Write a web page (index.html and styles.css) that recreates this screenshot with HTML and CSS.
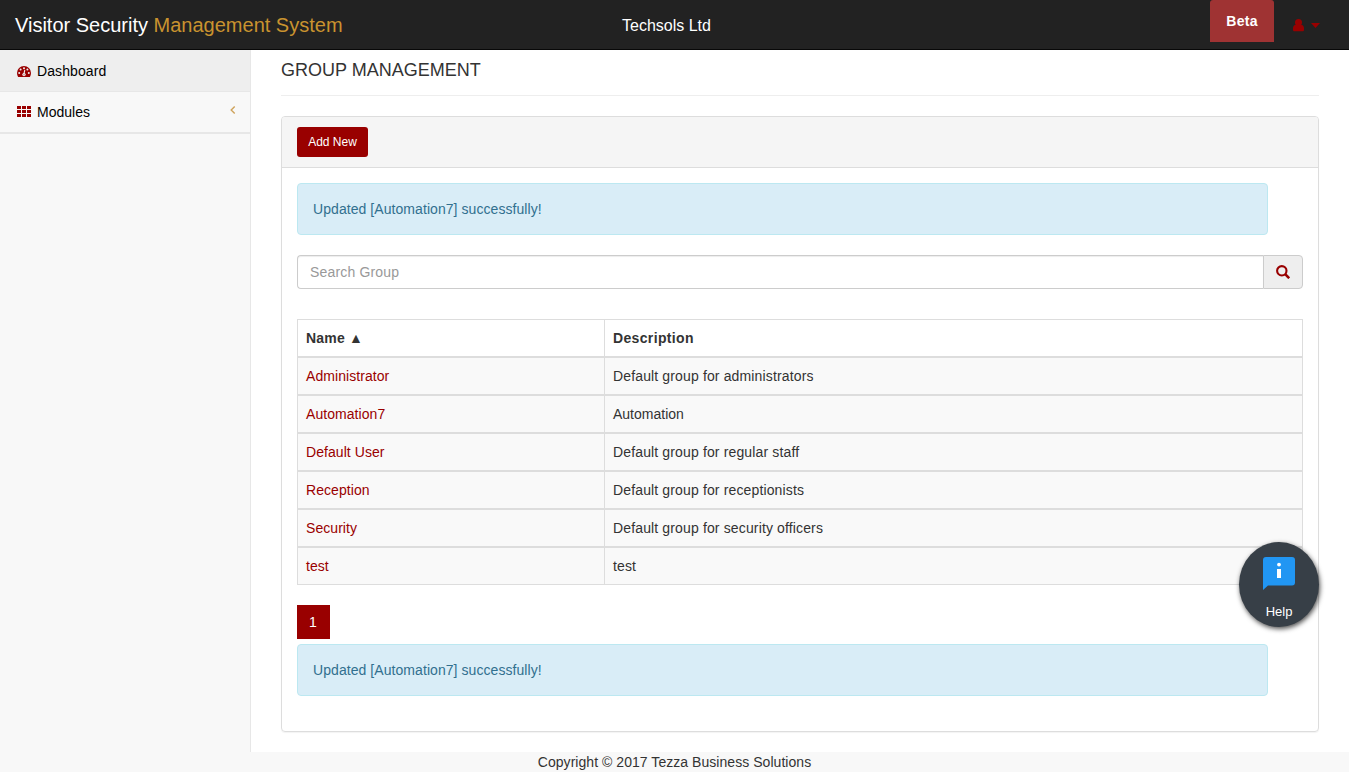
FILE: index.html
```html
<!DOCTYPE html>
<html lang="en">
<head>
<meta charset="utf-8">
<title>Visitor Security Management System</title>
<link rel="stylesheet" href="styles.css">
</head>
<body>
<header class="navbar">
  <a class="brand">Visitor Security <span class="brand-accent">Management System</span></a>
  <div class="company">Techsols Ltd</div>
  <div class="nav-right">
    <span class="beta">Beta</span>
    <a class="user-menu">
      <svg class="user-icon" width="12" height="13" viewBox="0 0 12 13"><circle cx="5.500" cy="3.500" r="3.500"/><path d="M2.500 6C.8 6.200 0 7.500 0 9.500v1.200c0 .9.600 1.600 1.600 1.600h7.800c1 0 1.600-.7 1.600-1.600V9.500C11 7.500 10.200 6.200 8.500 6z"/></svg>
      <svg class="caret" width="9" height="5" viewBox="0 0 9 5"><path d="M0 0h9L4.500 5z"/></svg>
    </a>
  </div>
</header>
<div class="layout">
  <nav class="sidebar">
    <a class="side-item active">
      <svg class="side-icon" width="14" height="15" viewBox="0 0 14 15"><path class="red" d="M0 10a7 7 0 0 1 14 0c0 1.400-.4 2.600-1 3.700-.1.200-.2.300-.4.300H1.400c-.2 0-.3-.1-.4-.3C.4 12.600 0 11.400 0 10z"/><g class="dial"><circle cx="2.200" cy="10" r="1"/><circle cx="3.600" cy="6.600" r="1"/><circle cx="7" cy="5.200" r="1"/><circle cx="10.400" cy="6.600" r="1"/><circle cx="11.800" cy="10" r="1"/><circle cx="7" cy="11.600" r="1.700"/><path d="M6.300 11l1-4.200 1 .2-.8 4.200z"/></g><circle class="red" cx="7" cy="11.700" r=".5"/></svg>
      <span>Dashboard</span>
    </a>
    <a class="side-item">
      <svg class="side-icon" width="14" height="14" viewBox="0 0 14 14"><path class="red" d="M0 1h4v3H0zM5 1h4v3H5zM10 1h4v3h-4zM0 5h4v3H0zM5 5h4v3H5zM10 5h4v3h-4zM0 9h4v3H0zM5 9h4v3H5zM10 9h4v3h-4z"/></svg>
      <span>Modules</span>
      <svg class="arrow" width="6" height="8" viewBox="0 0 6 8"><path d="M4.700.5L1.200 4l3.500 3.500"/></svg>
    </a>
  </nav>
  <main class="page">
    <h1 class="page-title">GROUP MANAGEMENT</h1>
    <section class="panel">
      <div class="panel-heading"><button class="btn-add">Add New</button></div>
      <div class="panel-body">
        <div class="alert">Updated [Automation7] successfully!</div>
        <div class="search">
          <input class="search-input" type="text" placeholder="Search Group">
          <button class="search-btn" aria-label="Search"><svg width="14" height="14" viewBox="0 0 14 14"><circle cx="5.800" cy="5.800" r="4.700"/><path class="handle" d="M9.200 9.200l4 4"/></svg></button>
        </div>
        <table class="groups">
          <thead><tr><th class="name-col">Name ▲</th><th class="desc-col">Description</th></tr></thead>
          <tbody>
            <tr><td><a>Administrator</a></td><td>Default group for administrators</td></tr>
            <tr><td><a>Automation7</a></td><td class="single">Automation</td></tr>
            <tr><td><a>Default User</a></td><td>Default group for regular staff</td></tr>
            <tr><td><a>Reception</a></td><td>Default group for receptionists</td></tr>
            <tr><td><a>Security</a></td><td>Default group for security officers</td></tr>
            <tr><td><a>test</a></td><td>test</td></tr>
          </tbody>
        </table>
        <a class="page-number">1</a>
        <div class="alert alert-bottom">Updated [Automation7] successfully!</div>
      </div>
    </section>
  </main>
</div>
<footer class="footer">Copyright © 2017 Tezza Business Solutions</footer>
<a class="help">
  <svg width="32" height="33" viewBox="0 0 32 33"><path class="bubble" d="M3 0h26a3 3 0 0 1 3 3v22.500a3 3 0 0 1-3 3H5L0 33V3a3 3 0 0 1 3-3z"/><circle class="mark" cx="16" cy="7.600" r="1.900"/><path class="mark" d="M14 12h4v9h-4z"/></svg>
  <span>Help</span>
</a>
</body>
</html>
```
FILE: styles.css
```css
* { box-sizing: border-box; }
body {
  margin: 0;
  height: 772px;
  display: flex;
  flex-direction: column;
  overflow: hidden;
  background: #f8f8f8;
  color: #333;
  font: 14px/20px "Liberation Sans", Arial, sans-serif;
}
svg { display: block; }
.navbar {
  display: grid;
  grid-template-columns: 622px 1fr 139px;
  flex: none;
  height: 50px;
  background: #222;
  border-bottom: 1px solid #080808;
  color: #fff;
}
.brand { padding: 15px 0 0 15px; font-size: 20px; white-space: nowrap; }
.brand-accent { color: #c9932f; }
.company { padding-top: 16px; font-size: 16px; }
.nav-right { display: flex; align-items: flex-start; }
.beta {
  width: 64px;
  height: 42px;
  padding-top: 11px;
  background: #9f3333;
  border-radius: 3px 3px 0 0;
  font-weight: bold;
  letter-spacing: .3px;
  text-align: center;
}
.user-menu { display: flex; align-items: center; gap: 6px; padding: 19px 0 0 19px; fill: #900; }
.layout { display: flex; flex: 1; }
.sidebar { width: 250px; }
.side-item {
  display: flex;
  align-items: center;
  height: 42px;
  padding: 0 14px 0 17px;
  border-bottom: 1px solid #e7e7e7;
  color: #000;
  letter-spacing: .1px;
}
.side-item + .side-item { border-bottom-width: 2px; letter-spacing: 0; }
.side-item.active { background: #eee; }
.side-icon { margin-right: 6px; }
.red { fill: #900; }
.dial { fill: #eee; }
.arrow { margin: -5px 0 0 auto; fill: none; stroke: #cfa35c; stroke-width: 1.400; }
.page {
  flex: 1;
  padding: 0 30px 20px;
  background: #fff;
  border-left: 1px solid #e7e7e7;
}
.page-title {
  margin: 0 0 20px;
  height: 46px;
  padding-top: 10px;
  border-bottom: 1px solid #eee;
  font-size: 18px;
  font-weight: normal;
}
.panel {
  height: 616px;
  border: 1px solid #ddd;
  border-radius: 4px;
  box-shadow: 0 1px 1px rgba(0, 0, 0, .05);
}
.panel-heading {
  height: 51px;
  padding: 10px 15px;
  background: #f5f5f5;
  border-bottom: 1px solid #ddd;
  border-radius: 3px 3px 0 0;
}
.btn-add {
  display: block;
  width: 71px;
  height: 30px;
  padding: 0;
  border: 0;
  border-radius: 3px;
  background: #900;
  color: #fff;
  font: 12px/18px "Liberation Sans", Arial, sans-serif;
}
.panel-body { padding: 15px; }
.alert {
  width: 971px;
  margin-bottom: 20px;
  padding: 15px;
  background: #d9edf7;
  border: 1px solid #bce8f1;
  border-radius: 4px;
  color: #31708f;
  letter-spacing: .065px;
}
.alert-bottom { margin: 5px 0 0; }
.search { display: flex; height: 34px; margin-bottom: 30px; }
.search-input {
  flex: 1;
  padding: 6px 12px;
  border: 1px solid #ccc;
  border-right: 0;
  border-radius: 4px 0 0 4px;
  box-shadow: inset 0 1px 1px rgba(0, 0, 0, .075);
  font: 14px/20px "Liberation Sans", Arial, sans-serif;
  letter-spacing: .17px;
}
.search-input::placeholder { color: #999; opacity: 1; }
.search-btn {
  width: 40px;
  padding: 0 0 0 12px;
  background: #eee;
  border: 1px solid #ccc;
  border-radius: 0 4px 4px 0;
}
.search-btn svg { fill: none; stroke: #900; stroke-width: 2.100; }
.search-btn .handle { stroke-width: 2.600; }
.groups {
  width: 100%;
  margin-bottom: 20px;
  border-collapse: separate;
  border-spacing: 0;
  border: 1px solid #ddd;
  border-width: 1px 1px 0 0;
  table-layout: fixed;
}
.groups th, .groups td {
  height: 38px;
  padding: 8px;
  border-left: 1px solid #ddd;
  border-bottom: 2px solid #ddd;
  text-align: left;
}
.groups td { background: #f9f9f9; letter-spacing: .14px; }
.groups td:first-child { letter-spacing: .06px; }
.groups td.single { letter-spacing: 0; }
.groups tr:last-child td { height: 37px; border-bottom-width: 1px; }
.groups a { color: #900; }
.groups .name-col { width: 307px; letter-spacing: .2px; }
.groups .desc-col { letter-spacing: .35px; }
.page-number {
  display: block;
  width: 33px;
  height: 34px;
  padding: 7px 0 0 12px;
  background: #900;
  color: #fff;
}
.footer { flex: none; height: 20px; text-align: center; letter-spacing: .045px; }
.help {
  position: absolute;
  left: 1239px;
  top: 542px;
  width: 80px;
  height: 85px;
  padding-top: 15px;
  display: flex;
  flex-direction: column;
  align-items: center;
  gap: 12px;
  background: #373f47;
  border-radius: 50%;
  box-shadow: 1px 2px 5px rgba(0, 0, 0, .7);
  color: #fff;
  font-size: 13px;
  line-height: 20px;
}
.bubble { fill: #2196f3; }
.mark { fill: #fff; }
```
